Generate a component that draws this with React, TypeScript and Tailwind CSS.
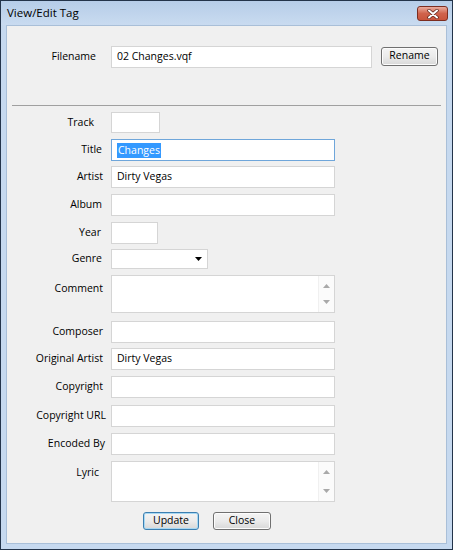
import type { ReactNode } from 'react';

const FONT = "font-['Open_Sans','Liberation_Sans',sans-serif]";
const BOX = 'border border-[#d5d5d5] bg-white';

type Row = {
  label: string;
  kind: 'text' | 'area' | 'select';
  width: string;
  height: string;
  gap: string;
  pad: string;
  value?: string;
  selected?: boolean;
};

const ROWS: Row[] = [
  { label: 'Track', kind: 'text', width: 'w-[49px]', height: 'h-[21px]', gap: 'mt-[6px]', pad: 'pr-[12px]' },
  { label: 'Title', kind: 'text', width: 'w-[224px]', height: 'h-[22px]', gap: 'mt-[6px]', pad: 'pr-[4px]', value: 'Changes', selected: true },
  { label: 'Artist', kind: 'text', width: 'w-[224px]', height: 'h-[22px]', gap: 'mt-[5px]', pad: 'pr-[3px]', value: 'Dirty Vegas' },
  { label: 'Album', kind: 'text', width: 'w-[224px]', height: 'h-[22px]', gap: 'mt-[6px]', pad: 'pr-[4px]' },
  { label: 'Year', kind: 'text', width: 'w-[47px]', height: 'h-[22px]', gap: 'mt-[6px]', pad: 'pr-[5px]' },
  { label: 'Genre', kind: 'select', width: 'w-[97px]', height: 'h-[20px]', gap: 'mt-[5px]', pad: 'pr-[4px]' },
  { label: 'Comment', kind: 'area', width: 'w-[224px]', height: 'h-[38px]', gap: 'mt-[6px]', pad: 'pr-[3px]' },
  { label: 'Composer', kind: 'text', width: 'w-[224px]', height: 'h-[22px]', gap: 'mt-[8px]', pad: 'pr-[3px]' },
  { label: 'Original Artist', kind: 'text', width: 'w-[224px]', height: 'h-[22px]', gap: 'mt-[5px]', pad: 'pr-[3px]', value: 'Dirty Vegas' },
  { label: 'Copyright', kind: 'text', width: 'w-[224px]', height: 'h-[22px]', gap: 'mt-[6px]', pad: 'pr-[3px]' },
  { label: 'Copyright URL', kind: 'text', width: 'w-[224px]', height: 'h-[22px]', gap: 'mt-[7px]', pad: 'pr-0' },
  { label: 'Encoded By', kind: 'text', width: 'w-[224px]', height: 'h-[22px]', gap: 'mt-[6px]', pad: 'pr-[1px]' },
  { label: 'Lyric', kind: 'area', width: 'w-[224px]', height: 'h-[41px]', gap: 'mt-[6px]', pad: 'pr-[7px]' },
];

function Arrow({ up, color }: { up?: boolean; color: string }) {
  return (
    <svg width="7" height="4" viewBox="0 0 7 4" className="block">
      <path d={up ? 'M0 4 L3.5 0 L7 4 Z' : 'M0 0 L7 0 L3.5 4 Z'} fill={color} />
    </svg>
  );
}

function Button({ children, primary, className }: { children: ReactNode; primary?: boolean; className: string }) {
  return (
    <button
      type="button"
      className={`${className} flex items-center justify-center rounded-[3px] border bg-gradient-to-b from-[#f4f4f4] via-[#ebebeb] to-[#d8d8d8] text-[10.5px] text-black ${
        primary ? 'border-[#3c7fb1] shadow-[inset_0_0_0_1px_#a7d8f3]' : 'border-[#707070] shadow-[inset_0_0_0_1px_#fcfcfc]'
      }`}
    >
      {children}
    </button>
  );
}

function Field({ row }: { row: Row }) {
  if (row.kind === 'area') {
    return (
      <div className={`${BOX} ${row.width} ${row.height} flex justify-end`}>
        <div className="flex w-[16px] flex-col items-center justify-between border-l border-[#f0f0f0] bg-[#fbfbfb] py-[8px]">
          <Arrow up color="#a9a9a9" />
          <Arrow color="#a9a9a9" />
        </div>
      </div>
    );
  }
  if (row.kind === 'select') {
    return (
      <div className={`${BOX} ${row.width} ${row.height} flex items-center justify-end pr-[5px]`}>
        <Arrow color="#000" />
      </div>
    );
  }
  return (
    <div
      className={`${row.width} ${row.height} flex items-center pl-[5px] ${
        row.selected ? 'border border-[#6fa6da] bg-white' : BOX
      }`}
    >
      {row.value &&
        (row.selected ? (
          <span className="bg-[#3399ff] px-px leading-[15px] text-white">{row.value}</span>
        ) : (
          <span>{row.value}</span>
        ))}
    </div>
  );
}

export default function App() {
  return (
    <div className={`${FONT} flex h-[550px] w-[453px] flex-col border border-[#23344a] bg-[#c6d9ef] text-black`}>
      {/* barre de titre */}
      <div className="flex h-[24px] shrink-0 items-center justify-between bg-gradient-to-b from-[#b6cde8] to-[#c9dbf0] pl-[6px] pr-[4px]">
        <span className="text-[11.5px]">View/Edit Tag</span>
        <div className="mt-[1px] flex h-[15px] w-[31px] items-center justify-center rounded-[3px] border border-[#7c2d20] bg-gradient-to-b from-[#e9ab9d] via-[#d0634c] to-[#c9543c]">
          <svg width="12" height="10" viewBox="0 0 12 10">
            <path d="M2 1.5 L10 8.5 M10 1.5 L2 8.5" stroke="#5a2219" strokeWidth="3.4" strokeLinecap="round" />
            <path d="M2 1.5 L10 8.5 M10 1.5 L2 8.5" stroke="#fff" strokeWidth="2" strokeLinecap="round" />
          </svg>
        </div>
      </div>

      {/* contenu */}
      <div className="mx-[5px] mb-[5px] flex flex-1 flex-col border border-[#a9bfd8] bg-[#f0f0f0] text-[10.5px]">
        <div className="mt-[20px] flex items-center">
          <span className="w-[89px] text-right">Filename</span>
          <div className={`${BOX} ml-[15px] flex h-[22px] w-[261px] items-center pl-[5px]`}>02 Changes.vqf</div>
          <Button className="ml-[9px] mb-[2px] h-[19px] w-[57px]">Rename</Button>
        </div>

        <div className="mx-[5px] mt-[37px] border-t border-[#a0a0a0]" />

        {ROWS.map((row) => (
          <div key={row.label} className={`${row.gap} flex ${row.kind === 'area' ? 'items-start' : 'items-center'}`}>
            <span
              className={`w-[99px] shrink-0 whitespace-nowrap text-right ${row.pad} ${
                row.kind === 'area' ? (row.label === 'Lyric' ? 'pt-[4px]' : 'pt-[6px]') : ''
              }`}
            >
              {row.label}
            </span>
            <div className="ml-[5px]">
              <Field row={row} />
            </div>
          </div>
        ))}

        <div className="mt-[10px] flex">
          <Button primary className="ml-[136px] h-[18px] w-[56px]">
            Update
          </Button>
          <Button className="ml-[14px] h-[18px] w-[58px]">Close</Button>
        </div>
      </div>
    </div>
  );
}
